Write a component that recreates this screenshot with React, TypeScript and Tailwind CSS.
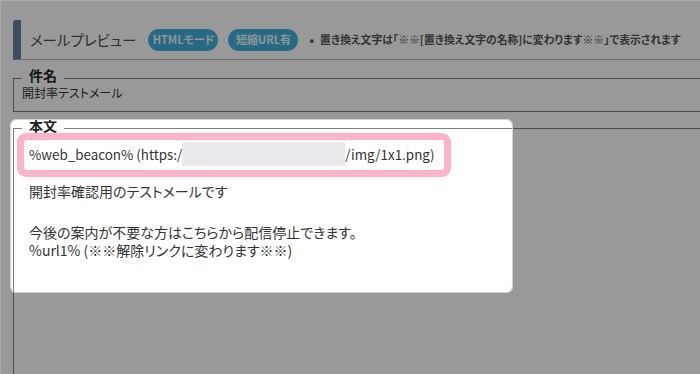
export default function App() {
  return (
    <div className="relative w-[700px] h-[374px] overflow-hidden bg-white border-l border-t border-[#aaaaaa] font-['Noto_Sans_CJK_JP',sans-serif] [font-feature-settings:'palt']">
      <div className="w-[820px] pl-[12px] pt-[19px]">
        {/* header */}
        <div className="flex items-center h-[40px] border-l-[8px] border-l-[#67849e] border-b border-b-[#b8b8b8] rounded-tl-[3px]">
          <div className="pl-[9px] text-[14.5px] text-[#505050]">メールプレビュー</div>
          <div className="ml-[12px] flex gap-[10px]">
            <span className="flex items-center justify-center w-[70px] h-[22px] rounded-full bg-[#41b1de] text-[#eef8fc] text-[11px] font-bold">HTMLモード</span>
            <span className="flex items-center justify-center w-[70px] h-[22px] rounded-full bg-[#41b1de] text-[#eef8fc] text-[11px] font-bold">短縮URL有</span>
          </div>
          <ul className="ml-[11px] text-[10.8px] font-bold text-[#555]">
            <li className="flex items-center gap-[6px]">
              <span className="text-[12px]">•</span>
              置き換え文字は「※※[置き換え文字の名称]に変わります※※」で表示されます
            </li>
          </ul>
        </div>

        {/* 件名 */}
        <fieldset className="mt-[7px] border border-[#808080] px-[8px] pb-[10px]">
          <legend className="px-[7px] pb-[6px] text-[14px] leading-[16px] font-bold text-[#222]">件名</legend>
          <div className="-mt-[4px] text-[12px] leading-[16px] text-[#333]">開封率テストメール</div>
        </fieldset>

        {/* 本文 */}
        <fieldset className="mt-[5px] h-[300px] border border-[#808080] px-[15px]">
          <legend className="-ml-[7px] px-[7px] pb-[6px] text-[14px] leading-[16px] font-bold text-[#222]">本文</legend>
          <div className="pt-[3px] text-[14px] text-[#333]">
            <div className="leading-[20px] text-[13.4px] flex items-center">
              %web_beacon% (https:/
              <span className="inline-block w-[163px] h-[24px] bg-[#ebe9ee] blur-[0.5px]" />
              /img/1x1.png)
            </div>
            <div className="mt-[16px] leading-[18px]">開封率確認用のテストメールです</div>
            <p className="mt-[23px] leading-[18px]">
              今後の案内が不要な方はこちらから配信停止できます。
              <br />
              %url1% (※※解除リンクに変わります※※)
            </p>
          </div>
        </fieldset>
      </div>

      {/* spotlight overlay */}
      <div className="absolute left-[10px] top-[119px] w-[501px] h-[172px] rounded-[5px] shadow-[0_0_0_9999px_rgba(0,0,0,0.4)] ring-1 ring-[#d4d4d4]" />
      <div className="absolute left-[16px] top-[132px] w-[434px] h-[44px] rounded-[9px] border-[7px] border-[#ffb2c8]" />
    </div>
  );
}
